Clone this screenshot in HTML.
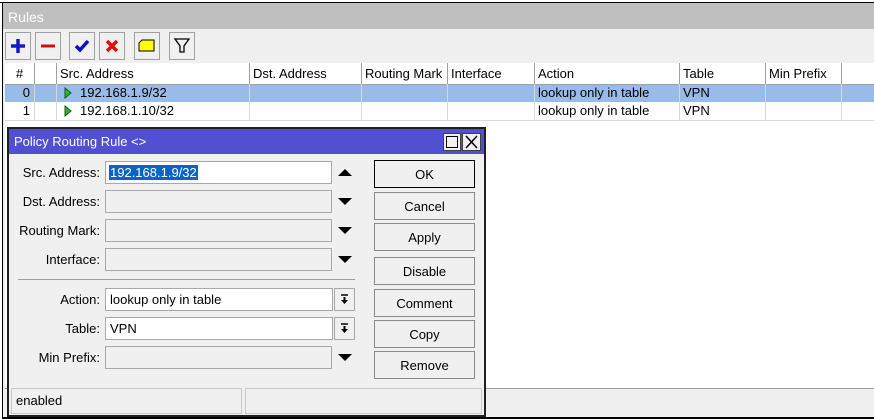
<!DOCTYPE html>
<html><head><style>
*{margin:0;padding:0;box-sizing:border-box}
body{width:874px;height:419px;overflow:hidden;background:#fff;font-family:"Liberation Sans",sans-serif;font-size:13px;color:#000;position:relative}
.a{position:absolute}
.tb{background:#f0f0f0;border:1px solid #a0a0a0;}
.hd{position:absolute;top:63px;height:22px;border-right:1px solid #a0a0a0;border-bottom:1px solid #a0a0a0;background:#fff;padding:3px 0 0 3px;white-space:nowrap;overflow:hidden}
.c{position:absolute;height:18px;padding:1px 0 0 3px;white-space:nowrap;border-right:1px solid #d8d8d8}
.lbl{position:absolute;width:92px;left:8px;text-align:right}
.fld{position:absolute;left:105px;width:227px;height:23px;border:1px solid #a8a8a8;background:#f0f0f0;padding:3px 0 0 4px}
.fw{background:#fff}
.dn{position:absolute;left:338px;width:0;height:0;border-left:7px solid transparent;border-right:7px solid transparent;border-top:7px solid #000}
.up{position:absolute;left:338px;width:0;height:0;border-left:7px solid transparent;border-right:7px solid transparent;border-bottom:7px solid #000}
.btn{position:absolute;left:374px;width:101px;height:28px;border:1px solid #8a8a8a;background:#f0f0f0;text-align:center;padding-top:6px}
.dd{position:absolute;left:334px;width:21px;height:23px;border:1px solid #a8a8a8;background:#f0f0f0}
</style></head><body>
<div class="a" style="left:0;top:0;width:874px;height:3px;background:#fff;border-bottom:1px solid #000"></div>
<div class="a" style="left:2px;top:3px;width:872px;height:26px;background:#bfbfbf;border-left:1px solid #000"></div>
<div class="a" style="left:8px;top:9px;color:#fff;font-size:14px">Rules</div>
<div class="a" style="left:2px;top:29px;width:872px;height:34px;background:#f0f0f0;border-left:1px solid #000"></div>
<div class="a" style="left:2px;top:63px;width:3px;height:356px;background:#f0f0f0;border-left:1px solid #000"></div>
<div class="a tb" style="left:5px;top:32px;width:26px;height:28px"><svg width="24" height="26"><path d="M12 6v14M5 13h14" stroke="#1818c8" stroke-width="3.5"/></svg></div>
<div class="a tb" style="left:35px;top:32px;width:26px;height:28px"><svg width="24" height="26"><path d="M5 13h14" stroke="#d01010" stroke-width="3"/></svg></div>
<div class="a tb" style="left:69px;top:32px;width:26px;height:28px"><svg width="24" height="26"><path d="M6 13l4 4 8-9" stroke="#1010c0" stroke-width="3.5" fill="none"/></svg></div>
<div class="a tb" style="left:99px;top:32px;width:26px;height:28px"><svg width="24" height="26"><path d="M7 8l10 10M17 8L7 18" stroke="#e01010" stroke-width="3.5"/></svg></div>
<div class="a tb" style="left:134px;top:32px;width:26px;height:28px"><svg width="24" height="26"><path d="M4 10l3-3h12v11H4z" fill="#ffff00" stroke="#000"/></svg></div>
<div class="a tb" style="left:169px;top:32px;width:26px;height:28px"><svg width="24" height="26"><path d="M5 6h14l-5 7v6h-4v-6z" fill="#f0f0f0" stroke="#000" stroke-width="1.3"/></svg></div>
<div class="hd" style="left:5px;width:30px;text-align:center;padding-left:0">#</div>
<div class="hd" style="left:35px;width:22px"></div>
<div class="hd" style="left:57px;width:193px">Src. Address</div>
<div class="hd" style="left:250px;width:112px">Dst. Address</div>
<div class="hd" style="left:362px;width:86px">Routing Mark</div>
<div class="hd" style="left:448px;width:87px">Interface</div>
<div class="hd" style="left:535px;width:145px">Action</div>
<div class="hd" style="left:680px;width:86px">Table</div>
<div class="hd" style="left:766px;width:76px">Min Prefix</div>
<div class="hd" style="left:842px;width:32px;border-right:none"></div>
<div class="a" style="left:5px;top:85px;width:869px;height:17px;background:#99bbe8"></div>
<div class="c" style="left:5px;top:84px;width:30px;text-align:right;padding-right:4px">0</div>
<div class="c" style="left:35px;top:84px;width:22px"></div>
<div class="c" style="left:57px;top:84px;width:193px;padding-left:23px">192.168.1.9/32</div>
<div class="c" style="left:250px;top:84px;width:112px"></div><div class="c" style="left:362px;top:84px;width:86px"></div><div class="c" style="left:448px;top:84px;width:87px"></div>
<div class="c" style="left:535px;top:84px;width:145px">lookup only in table</div>
<div class="c" style="left:680px;top:84px;width:86px">VPN</div>
<div class="c" style="left:766px;top:84px;width:76px"></div>
<div class="c" style="left:5px;top:102px;width:30px;text-align:right;padding-right:4px">1</div>
<div class="c" style="left:35px;top:102px;width:22px"></div>
<div class="c" style="left:57px;top:102px;width:193px;padding-left:23px">192.168.1.10/32</div>
<div class="c" style="left:250px;top:102px;width:112px"></div><div class="c" style="left:362px;top:102px;width:86px"></div><div class="c" style="left:448px;top:102px;width:87px"></div>
<div class="c" style="left:535px;top:102px;width:145px">lookup only in table</div>
<div class="c" style="left:680px;top:102px;width:86px">VPN</div>
<div class="c" style="left:766px;top:102px;width:76px"></div>
<div class="a" style="left:5px;top:120px;width:869px;height:1px;background:#d8d8d8"></div>
<svg class="a" style="left:64px;top:87px" width="8" height="32"><path d="M1 1l6 5-6 5z" fill="#20c020" stroke="#205020"/><path d="M1 19l6 5-6 5z" fill="#20c020" stroke="#205020"/></svg>
<div class="a" style="left:5px;top:388px;width:869px;height:29px;background:#f0f0f0;border-top:1px solid #a0a0a0"></div>
<div class="a" style="left:2px;top:417px;width:872px;height:2px;background:#000"></div>
<div class="a" style="left:7px;top:127px;width:479px;height:290px;background:#f0f0f0;border:2px solid #202020"></div>
<div class="a" style="left:9px;top:129px;width:475px;height:25px;background:#5050d0"></div>
<div class="a" style="left:14px;top:134px;color:#fff;font-size:13px">Policy Routing Rule &lt;&gt;</div>
<div class="a" style="left:443px;top:133px;width:18px;height:18px;background:#f0f0f0;border:1px solid #404040"><div style="margin:2px;width:12px;height:12px;border:1px solid #000"></div></div>
<div class="a" style="left:462px;top:133px;width:19px;height:18px;background:#f0f0f0;border:1px solid #404040"><svg width="17" height="16"><path d="M3 2l11 12M14 2L3 14" stroke="#000" stroke-width="1.5"/></svg></div>
<div class="lbl" style="top:165px">Src. Address:</div>
<div class="fld fw" style="top:161px;padding-left:3px"><span style="background:#0a64c8;color:#fff;padding:0 1px">192.168.1.9/32</span></div>
<div class="up" style="top:169px"></div>
<div class="lbl" style="top:194px">Dst. Address:</div>
<div class="fld" style="top:190px"></div><div class="dn" style="top:198px"></div>
<div class="lbl" style="top:223px">Routing Mark:</div>
<div class="fld" style="top:219px"></div><div class="dn" style="top:227px"></div>
<div class="lbl" style="top:252px">Interface:</div>
<div class="fld" style="top:248px"></div><div class="dn" style="top:256px"></div>
<div class="a" style="left:18px;top:279px;width:337px;height:1px;background:#a0a0a0"></div>
<div class="lbl" style="top:292px">Action:</div>
<div class="fld fw" style="top:288px;width:228px">lookup only in table</div><div class="dd" style="top:288px"><svg width="19" height="21"><path d="M6 6h7" stroke="#000" stroke-width="1.5"/><path d="M9.5 8v4" stroke="#000" stroke-width="2"/><path d="M6 11h7l-3.5 4z" fill="#000"/></svg></div>
<div class="lbl" style="top:321px">Table:</div>
<div class="fld fw" style="top:317px;width:228px">VPN</div><div class="dd" style="top:317px"><svg width="19" height="21"><path d="M6 6h7" stroke="#000" stroke-width="1.5"/><path d="M9.5 8v4" stroke="#000" stroke-width="2"/><path d="M6 11h7l-3.5 4z" fill="#000"/></svg></div>
<div class="lbl" style="top:350px">Min Prefix:</div>
<div class="fld" style="top:346px"></div><div class="dn" style="top:354px"></div>
<div class="btn" style="top:160px;border:1px solid #000">OK</div>
<div class="btn" style="top:192px">Cancel</div>
<div class="btn" style="top:223px">Apply</div>
<div class="btn" style="top:257px">Disable</div>
<div class="btn" style="top:289px">Comment</div>
<div class="btn" style="top:320px">Copy</div>
<div class="btn" style="top:351px">Remove</div>
<div class="a" style="left:11px;top:388px;width:231px;height:26px;border:1px solid #c8c8c8;padding:4px 0 0 4px">enabled</div>
<div class="a" style="left:245px;top:388px;width:237px;height:26px;border:1px solid #c8c8c8"></div>
</body></html>
